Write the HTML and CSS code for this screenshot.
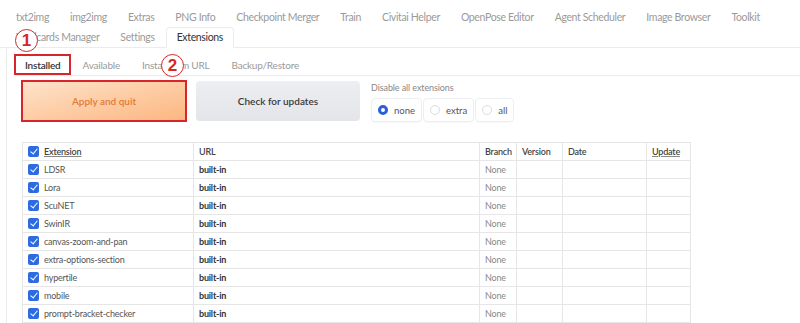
FILE: index.html
```html
<!DOCTYPE html>
<html lang="en">
<head>
<meta charset="UTF-8">
<title>Extensions</title>
<link rel="stylesheet" href="styles.css">
</head>
<body>

<div class="main-tabs">
    <span class="tab">txt2img</span>
    <span class="tab">img2img</span>
    <span class="tab">Extras</span>
    <span class="tab">PNG Info</span>
    <span class="tab">Checkpoint Merger</span>
    <span class="tab">Train</span>
    <span class="tab">Civitai Helper</span>
    <span class="tab">OpenPose Editor</span>
    <span class="tab">Agent Scheduler</span>
    <span class="tab">Image Browser</span>
    <span class="tab">Toolkit</span>
    <span class="break"></span>
    <span class="tab">Wildcards Manager</span>
    <span class="tab">Settings</span>
    <span class="tab selected">Extensions</span>
</div>

<div class="panel">
    <div class="sub-tabs">
        <span class="tab selected marked">Installed</span>
        <span class="tab">Available</span>
        <span class="tab">Install from URL</span>
        <span class="tab">Backup/Restore</span>
    </div>

    <div class="content">
        <div class="actions">
            <button class="btn btn-apply">Apply and quit</button>
            <button class="btn btn-check">Check for updates</button>
            <div class="disable-group">
                <div class="group-label">Disable all extensions</div>
                <div class="radios">
                    <label class="radio"><span class="dot checked"></span>none</label>
                    <label class="radio"><span class="dot"></span>extra</label>
                    <label class="radio"><span class="dot"></span>all</label>
                </div>
            </div>
        </div>

        <table class="ext-table">
            <thead>
                <tr>
                    <th class="col-ext"><span class="check"></span><u>Extension</u></th>
                    <th class="col-url">URL</th>
                    <th class="col-branch">Branch</th>
                    <th class="col-version">Version</th>
                    <th class="col-date">Date</th>
                    <th class="col-update"><u>Update</u></th>
                </tr>
            </thead>
            <tbody id="rows"></tbody>
        </table>
    </div>
</div>

<span class="badge badge-1">1</span>
<span class="badge badge-2">2</span>

<script>
const names = ['LDSR', 'Lora', 'ScuNET', 'SwinIR', 'canvas-zoom-and-pan',
    'extra-options-section', 'hypertile', 'mobile', 'prompt-bracket-checker'];
const rows = document.getElementById('rows');
names.forEach(function(name) {
    const tr = document.createElement('tr');
    tr.innerHTML = '<td class="name"><span class="check"></span>' + name + '</td>' +
        '<td class="url">built-in</td><td class="branch">None</td><td></td><td></td><td></td>';
    rows.appendChild(tr);
});
</script>

</body>
</html>
```

FILE: styles.css
```css
html, body {
    margin: 0;
    padding: 0;
}
body {
    font-family: Lato, "Noto Sans", sans-serif;
    background: #fff;
    color: #333;
    position: relative;
    overflow: hidden;
    height: 323px;
}
.main-tabs {
    display: flex;
    flex-wrap: wrap;
    gap: 0 1px;
    padding: 7px 0 0 6px;
    border-bottom: 1px solid #ececec;
}
.break {
    flex-basis: 100%;
    height: 0;
}
.tab {
    padding: 0 10px;
    height: 20px;
    line-height: 20px;
    font-size: 10.5px;
    letter-spacing: -0.35px;
    color: #9a9a9a;
    white-space: nowrap;
}
.main-tabs .selected {
    color: #333;
    background: #fff;
    border: 1px solid #ececec;
    border-bottom: none;
    border-radius: 4px 4px 0 0;
    margin-bottom: -1px;
    height: 20px;
    line-height: 18px;
}
.panel {
    margin-left: 6px;
    border-left: 1px solid #ececec;
    padding: 7px 0 0 8px;
}
.sub-tabs {
    display: flex;
    gap: 2px;
    border-bottom: 1px solid #ececec;
    height: 20px;
}
.sub-tabs .tab {
    font-size: 10px;
    letter-spacing: -0.2px;
}
.sub-tabs .selected {
    color: #333;
    font-weight: 600;
}
.marked {
    outline: 2px solid #d7262b;
    outline-offset: -1px;
    height: 19px;
    line-height: 20px;
}
.content {
    padding: 5px 0 0 7px;
}
.actions {
    display: flex;
    align-items: flex-start;
    gap: 10px;
}
.btn {
    width: 164px;
    height: 40px;
    border: none;
    border-radius: 4px;
    font-family: inherit;
    font-size: 10px;
    font-weight: 600;
}
.btn-apply {
    background: linear-gradient(to bottom right, #fee3cb, #fcb67f);
    color: #e27a38;
    outline: 2px solid #d7262b;
    outline-offset: -1px;
    border-radius: 0;
}
.btn-check {
    background: linear-gradient(to bottom, #eceef1, #e3e5e9);
    color: #3a3a3a;
}
.disable-group {
    margin-left: 1px;
}
.group-label {
    font-size: 9px;
    letter-spacing: -0.1px;
    color: #888;
    height: 14px;
    line-height: 14px;
}
.radios {
    display: flex;
    gap: 1px;
    margin-top: 3px;
}
.radio {
    display: flex;
    align-items: center;
    gap: 6px;
    height: 22px;
    padding: 0 6px 0 6px;
    border: 1px solid #eceef2;
    border-radius: 4px;
    font-size: 9.5px;
    color: #555;
    box-shadow: 0 1px 1px rgba(0, 0, 0, 0.03);
}
.dot {
    width: 10px;
    height: 10px;
    border-radius: 50%;
    border: 1px solid #dcdcdc;
    box-sizing: border-box;
    background: #fff;
}
.dot.checked {
    border: 3px solid #2b5fd9;
}
.ext-table {
    margin-top: 20px;
    border-collapse: collapse;
    width: 668px;
    font-size: 9px;
    letter-spacing: -0.2px;
    table-layout: fixed;
}
.ext-table th, .ext-table td {
    border: 1px solid #e6e6e6;
    height: 17px;
    padding: 0 5px;
    text-align: left;
    white-space: nowrap;
    overflow: hidden;
}
.ext-table th {
    font-weight: 600;
    color: #444;
}
.ext-table u {
    text-decoration-color: #888;
}
.col-ext { width: 160px; }
.col-url { width: 275px; }
.col-branch { width: 26px; }
.col-version { width: 35px; }
.col-date { width: 73px; }
.col-update { width: 33px; }
.name {
    color: #555;
}
.url {
    font-weight: 700;
    color: #333;
}
.branch {
    color: #888;
}
.check {
    display: inline-block;
    vertical-align: -2px;
    width: 11px;
    height: 11px;
    margin-right: 5px;
    border-radius: 2px;
    background: #2e6be0;
    position: relative;
}
.check::after {
    content: "";
    position: absolute;
    left: 3.5px;
    top: 1px;
    width: 3px;
    height: 6px;
    border: solid #fff;
    border-width: 0 1.6px 1.6px 0;
    transform: rotate(40deg);
}
.badge {
    position: absolute;
    width: 21px;
    height: 21px;
    border: 1.5px solid #d7262b;
    border-radius: 50%;
    background: #fff;
    color: #d7262b;
    font-family: "Liberation Sans", sans-serif;
    font-size: 17px;
    font-weight: 700;
    line-height: 21px;
    text-align: center;
}
.badge-1 {
    left: 15px;
    top: 29px;
}
.badge-2 {
    left: 161px;
    top: 54px;
}
```
